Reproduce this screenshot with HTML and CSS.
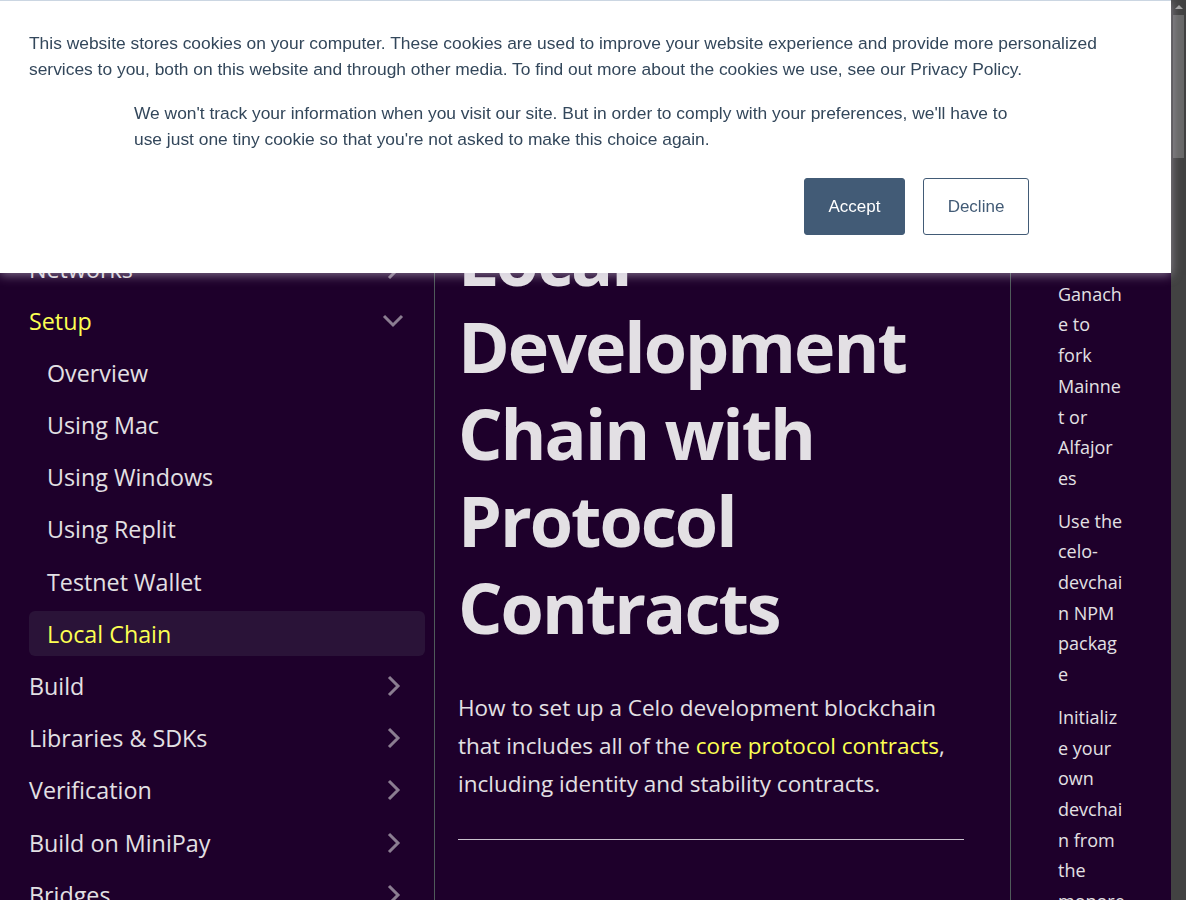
FILE: index.html
```html
<!DOCTYPE html>
<html lang="en">
<head>
<meta charset="utf-8">
<title>Local Development Chain with Protocol Contracts | Celo Docs</title>
<link rel="stylesheet" href="styles.css">
</head>
<body>
<div class="window">
  <div class="page">
    <aside class="sidebar">
      <ul class="menu">
        <li class="menu-row"><span class="menu-link">Networks</span>
          <svg class="chev" viewBox="0 0 16 24" width="16" height="24"><polyline points="3,3 12,12 3,21"/></svg></li>
        <li class="menu-row active-cat"><span class="menu-link">Setup</span>
          <svg class="chev" viewBox="0 0 24 16" width="24" height="16"><polyline points="3,3 12,12 21,3"/></svg></li>
        <li class="menu-row sub"><span class="menu-link">Overview</span></li>
        <li class="menu-row sub"><span class="menu-link">Using Mac</span></li>
        <li class="menu-row sub"><span class="menu-link">Using Windows</span></li>
        <li class="menu-row sub"><span class="menu-link">Using Replit</span></li>
        <li class="menu-row sub"><span class="menu-link">Testnet Wallet</span></li>
        <li class="menu-row sub current"><span class="menu-link">Local Chain</span></li>
        <li class="menu-row"><span class="menu-link">Build</span>
          <svg class="chev" viewBox="0 0 16 24" width="16" height="24"><polyline points="3,3 12,12 3,21"/></svg></li>
        <li class="menu-row"><span class="menu-link">Libraries &amp; SDKs</span>
          <svg class="chev" viewBox="0 0 16 24" width="16" height="24"><polyline points="3,3 12,12 3,21"/></svg></li>
        <li class="menu-row"><span class="menu-link">Verification</span>
          <svg class="chev" viewBox="0 0 16 24" width="16" height="24"><polyline points="3,3 12,12 3,21"/></svg></li>
        <li class="menu-row"><span class="menu-link">Build on MiniPay</span>
          <svg class="chev" viewBox="0 0 16 24" width="16" height="24"><polyline points="3,3 12,12 3,21"/></svg></li>
        <li class="menu-row"><span class="menu-link">Bridges</span>
          <svg class="chev" viewBox="0 0 16 24" width="16" height="24"><polyline points="3,3 12,12 3,21"/></svg></li>
      </ul>
    </aside>
    <main class="main">
      <h1 class="title">Local Development Chain with Protocol Contracts</h1>
      <p class="lead">How to set up a Celo development blockchain that includes all of the <a class="link">core protocol contracts</a>, including identity and stability contracts.</p>
      <hr class="rule">
    </main>
    <nav class="toc">
      <ul class="toc-list">
        <li class="toc-item">Use<br>Ganach<br>e to<br>fork<br>Mainne<br>t or<br>Alfajor<br>es</li>
        <li class="toc-item">Use the<br>celo-<br>devchai<br>n NPM<br>packag<br>e</li>
        <li class="toc-item">Initializ<br>e your<br>own<br>devchai<br>n from<br>the<br>monore<br>po</li>
      </ul>
    </nav>
  </div>
  <div class="scrollbar">
    <div class="sb-arrow"></div>
    <div class="sb-thumb"></div>
  </div>
</div>

<div class="cookie-banner">
  <p class="cookie-text">This website stores cookies on your computer. These cookies are used to improve your website experience and provide more personalized services to you, both on this website and through other media. To find out more about the cookies we use, see our Privacy Policy.</p>
  <div class="cookie-inner">
    <p class="cookie-text">We won't track your information when you visit our site. But in order to comply with your preferences, we'll have to use just one tiny cookie so that you're not asked to make this choice again.</p>
    <div class="cookie-actions">
      <button class="btn btn-accept">Accept</button>
      <button class="btn btn-decline">Decline</button>
    </div>
  </div>
</div>
</body>
</html>
```

FILE: styles.css
```css
* { box-sizing: border-box; }
html, body {
  margin: 0;
  padding: 0;
  height: 900px;
  overflow: hidden;
  background: #1e002b;
}
body {
  font-family: "Open Sans", "Noto Sans", sans-serif;
  color: #e3e0e4;
}
.window {
  display: flex;
  height: 900px;
}
.page {
  display: flex;
  width: 1171px;
  height: 900px;
  background: #1e002b;
}
.sidebar {
  width: 435px;
  flex: none;
  border-right: 1px solid #4f5a5a;
  padding: 246px 9px 0 17px;
}
.menu {
  list-style: none;
  margin: 0;
  padding: 0;
  display: flex;
  flex-direction: column;
  gap: 7.2px;
}
.menu-row {
  height: 45px;
  flex: none;
  display: flex;
  align-items: center;
  justify-content: space-between;
  padding: 0 23px 0 12px;
  border-radius: 6px;
  font-size: 23.3px;
  color: #e3e0e4;
}
.menu-row.sub {
  margin-left: 12px;
  padding-left: 18px;
}
.active-cat { padding-right: 20px; }
.active-cat .menu-link,
.current .menu-link { color: #fcff52; }
.current { background: #2a1338; }
.chev {
  fill: none;
  stroke: #8b7d91;
  stroke-width: 3;
}
.main {
  width: 576px;
  flex: none;
  border-right: 1px solid #4f5a5a;
  padding: 0 46px 0 23px;
}
.title {
  margin: 216px 0 0;
  font-size: 70px;
  line-height: 87px;
  font-weight: 700;
  color: #e3e0e4;
  letter-spacing: -2px;
}
.lead {
  margin: 38px 0 0;
  font-size: 22.5px;
  line-height: 38px;
  font-weight: 400;
  color: #e3e0e4;
}
.link { color: #fcff52; }
.rule {
  margin: 36px 0 0;
  border: 0;
  border-top: 1px solid #c9c3cc;
}
.toc {
  flex: 1;
  padding: 248px 0 0 47px;
}
.toc-list {
  list-style: none;
  margin: 0;
  padding: 0;
  display: flex;
  flex-direction: column;
  gap: 12px;
}
.toc-item {
  font-size: 18px;
  line-height: 30.7px;
  white-space: nowrap;
  color: #e3e0e4;
}
.scrollbar {
  width: 15px;
  flex: none;
  background: #424242;
}
.sb-arrow {
  margin: 5px auto 0;
  width: 0;
  height: 0;
  border-left: 4px solid transparent;
  border-right: 4px solid transparent;
  border-bottom: 4px solid #a3a3a3;
}
.sb-thumb {
  margin: 6px 2px 0;
  height: 143px;
  background: #686868;
}
.cookie-banner {
  position: fixed;
  top: 0;
  left: 0;
  width: 1171px;
  height: 273px;
  background: #ffffff;
  border-top: 1px solid #cbd6e2;
  padding: 29px 29px 0;
  box-shadow: 0 2px 10px rgba(210, 200, 220, 0.55);
  font-family: "Liberation Sans", Arial, sans-serif;
  color: #33475b;
}
.cookie-text {
  margin: 0;
  font-size: 17.4px;
  line-height: 26px;
}
.cookie-inner {
  width: 903px;
  margin: 18px auto 0;
}
.cookie-actions {
  display: flex;
  justify-content: flex-end;
  gap: 18px;
  margin-top: 26px;
  padding-right: 8px;
}
.btn {
  height: 57px;
  border-radius: 3px;
  font-family: "Liberation Sans", Arial, sans-serif;
  font-size: 17px;
  cursor: pointer;
}
.btn-accept {
  width: 101px;
  background: #425b76;
  border: 1px solid #425b76;
  color: #ffffff;
}
.btn-decline {
  width: 106px;
  background: #ffffff;
  border: 1px solid #425b76;
  color: #425b76;
}
```
